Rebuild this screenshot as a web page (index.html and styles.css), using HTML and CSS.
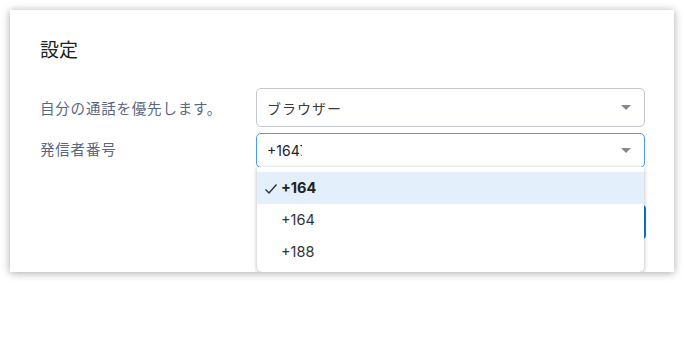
FILE: index.html
```html
<!DOCTYPE html>
<html>
<head>
  <title>設定</title>
  <link rel="stylesheet" href="styles.css">
</head>
<body>
  <div class="dialog">
    <h2 class="title">設定</h2>

    <div class="row">
      <label class="label">自分の通話を優先します。</label>
      <div class="select">
        <span class="value">ブラウザー</span>
        <span class="caret"></span>
      </div>
    </div>

    <div class="row row-open">
      <label class="label">発信者番号</label>
      <div class="select select-focus">
        <span class="value value-typed">+1647</span>
        <span class="caret"></span>
        <ul class="menu">
          <li class="option option-active">
            <svg class="check" width="14" height="12" viewBox="0 0 14 12"><path d="M1.5 6.5 L5 10 L12.5 1.5" fill="none" stroke="#333" stroke-width="1.4"/></svg>
            +164
          </li>
          <li class="option">+164</li>
          <li class="option">+188</li>
        </ul>
      </div>
    </div>

    <div class="footer">
      <button class="btn" type="button">保存</button>
    </div>
  </div>
</body>
</html>
```

FILE: styles.css
```css
body {
  margin: 0;
  background: #fff;
  font-family: Inter, "Noto Sans CJK JP", sans-serif;
}

.dialog {
  margin: 10px;
  width: 664px;
  height: 262px;
  box-sizing: border-box;
  padding: 26px 29px 0 30px;
  background: #fff;
  box-shadow: 0 1px 8px rgba(0, 0, 0, 0.35);
  overflow: hidden;
}

.title {
  margin: 0 0 26px;
  font-family: "Noto Sans CJK JP", sans-serif;
  font-size: 19px;
  font-weight: 400;
  line-height: 26px;
  color: #222;
}

.row {
  display: flex;
  align-items: center;
  margin-bottom: 6px;
}

.label {
  width: 216px;
  font-family: "Noto Sans CJK JP", sans-serif;
  font-size: 14.5px;
  letter-spacing: 0.8px;
  color: #58677f;
}

.select {
  position: relative;
  flex: 1;
  height: 39px;
  box-sizing: border-box;
  display: flex;
  align-items: center;
  padding: 0 10px;
  border: 1px solid #c4c7cc;
  border-radius: 5px;
  font-size: 14px;
  color: #3a3a3a;
}

.select-focus {
  height: 35px;
  border-color: #4a9de6;
}

.row-open .label {
  margin-top: -4px;
}

.value {
  flex: 1;
  font-family: "Noto Sans CJK JP", sans-serif;
  letter-spacing: 1px;
}

.value-typed {
  flex: none;
  width: 35px;
  overflow: hidden;
  white-space: nowrap;
  font-family: Inter, sans-serif;
  font-size: 14px;
  letter-spacing: 0;
  color: #222;
}

.caret {
  margin-left: auto;
  margin-right: 3px;
  width: 0;
  height: 0;
  border-left: 5px solid transparent;
  border-right: 5px solid transparent;
  border-top: 5px solid #85888e;
}

.menu {
  position: absolute;
  top: 33px;
  left: 0;
  right: 0;
  z-index: 2;
  margin: 0;
  padding: 5px 0 4px;
  list-style: none;
  background: #fff;
  border-radius: 0 0 5px 5px;
  box-shadow: 0 1px 4px rgba(0, 0, 0, 0.3);
}

.option {
  position: relative;
  height: 32px;
  line-height: 32px;
  padding-left: 24px;
  font-size: 14.5px;
  color: #333;
}

.option-active {
  background: #e3effa;
  font-weight: 700;
  color: #222;
}

.check {
  position: absolute;
  left: 7px;
  top: 11px;
}

.footer {
  display: flex;
  justify-content: flex-end;
  margin-top: 37px;
  margin-right: -1px;
}

.btn {
  height: 34px;
  padding: 0 16px;
  border: none;
  border-radius: 4px;
  background: #0b7ad6;
  color: #fff;
  font-family: "Noto Sans CJK JP", sans-serif;
  font-size: 14px;
}
```
